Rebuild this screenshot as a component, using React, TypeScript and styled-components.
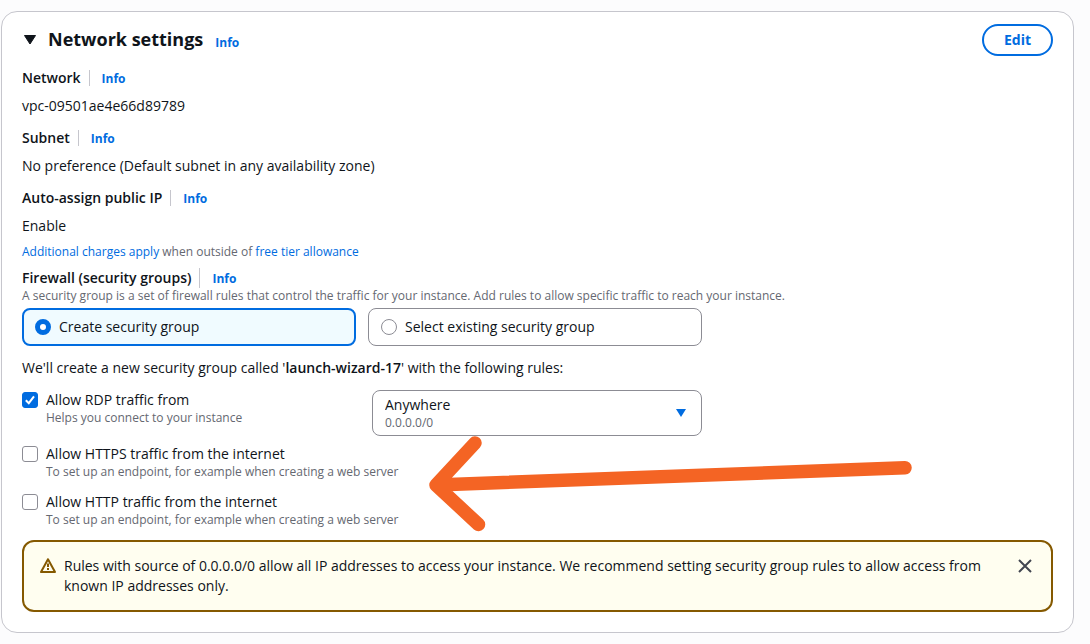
import React, { useId, useState } from "react";
import styled, { createGlobalStyle, css } from "styled-components";

const color = {
  text: "#0f141a",
  muted: "#656871",
  link: "#006ce0",
  border: "#8c8c94",
  divider: "#c6c6cd",
  warning: "#855900",
};

const GlobalStyle = createGlobalStyle`
  *, *::before, *::after { box-sizing: border-box; }
  body {
    margin: 0;
    background: #fcfcfd;
    color: ${color.text};
    font-family: "Open Sans", "Noto Sans", sans-serif;
    font-size: 14px;
    line-height: 20px;
  }
  p, h2, h3, fieldset { margin: 0; padding: 0; border: 0; min-width: 0; }
  button, select, input { font: inherit; color: inherit; margin: 0; }
  b { font-weight: 600; }
`;

const Page = styled.main`
  padding: 11px 16px 11px 1px;
`;

const Card = styled.section`
  display: flex;
  flex-direction: column;
  gap: 12px;
  padding: 12px 20px 20px;
  background: #fff;
  border: 1px solid ${color.divider};
  border-radius: 16px;
`;

const Header = styled.header`
  display: flex;
  align-items: center;
  justify-content: space-between;
`;

const HeadingGroup = styled.div`
  display: flex;
  align-items: baseline;
  gap: 12px;
`;

const ExpandButton = styled.button`
  display: flex;
  align-items: center;
  gap: 10px;
  padding: 0;
  border: 0;
  background: none;
  cursor: pointer;
`;

const Title = styled.h2`
  font-size: 18px;
  line-height: 24px;
  font-weight: 700;
`;

const InfoLink = styled.a`
  color: ${color.link};
  font-size: 12px;
  font-weight: 700;
  text-decoration: none;
`;

const EditButton = styled.button`
  height: 32px;
  padding: 0 20px;
  border: 2px solid ${color.link};
  border-radius: 20px;
  background: #fff;
  color: ${color.link};
  font-weight: 700;
  cursor: pointer;
`;

const Field = styled.div`
  display: flex;
  flex-direction: column;
  gap: 8px;
`;

const LabelRow = styled.div`
  display: flex;
  align-items: center;
`;

const Label = styled.h3`
  font-size: 14px;
  font-weight: 600;
  margin-right: 8px;
`;

const Divided = styled.span<{ $tall?: boolean }>`
  display: flex;
  align-items: center;
  height: ${(p) => (p.$tall ? 20 : 16)}px;
  padding: 2px 0 0 12px;
  border-left: 1px solid ${color.divider};
`;

const Small = styled.p`
  color: ${color.muted};
  font-size: 12px;
  line-height: 16px;
`;

const TextLink = styled.a`
  color: ${color.link};
  text-decoration: none;
`;

const Firewall = styled.div`
  margin-top: -4px;
`;

const Tiles = styled.fieldset`
  display: grid;
  grid-template-columns: 1fr 1fr;
  gap: 12px;
  max-width: 680px;
  margin-top: 4px;
`;

const Tile = styled.label<{ $selected: boolean }>`
  display: flex;
  align-items: center;
  gap: 8px;
  height: 38px;
  padding: 0 ${(p) => (p.$selected ? 11 : 12)}px;
  border: ${(p) => (p.$selected ? `2px solid ${color.link}` : `1px solid ${color.border}`)};
  border-radius: 8px;
  background: ${(p) => (p.$selected ? "#f0fbff" : "#fff")};
`;

const Radio = styled.input`
  appearance: none;
  flex: none;
  width: 16px;
  height: 16px;
  border: 1px solid ${color.border};
  border-radius: 50%;
  background: #fff;
  &:checked {
    border: 5px solid ${color.link};
  }
`;

const Rules = styled.div`
  position: relative;
  display: flex;
  flex-direction: column;
  gap: 12px;
`;

const RuleRow = styled.div`
  display: grid;
  grid-template-columns: 1fr 1fr;
  gap: 20px;
  max-width: 680px;
  margin-bottom: -4px;
`;

const Rule = styled.div`
  display: grid;
  grid-template-columns: 16px 1fr;
  column-gap: 8px;
  align-content: start;
`;

const checkedBox = css`
  background: ${color.link};
  border-color: ${color.link};
`;

const CheckHolder = styled.span`
  display: grid;
  align-items: center;
  justify-items: center;
  > * { grid-area: 1 / 1; }
`;

const CheckBox = styled.input`
  appearance: none;
  width: 16px;
  height: 16px;
  border: 1px solid ${color.border};
  border-radius: 3px;
  background: #fff;
  &:checked { ${checkedBox} }
`;

const Glyph = styled.svg`
  display: block;
  flex: none;
  pointer-events: none;
`;

const RuleHint = styled(Small)`
  grid-column: 2;
`;

const SelectHolder = styled.div`
  display: grid;
  > * { grid-area: 1 / 1; }
`;

const Select = styled.select`
  appearance: none;
  width: 100%;
  height: 46px;
  padding: 4px 32px 20px 12px;
  border: 1px solid ${color.border};
  border-radius: 8px;
  background: #fff;
  line-height: 20px;
`;

const SelectHint = styled(Small)`
  align-self: end;
  padding: 0 0 5px 13px;
  pointer-events: none;
`;

const SelectCaret = styled(Glyph)`
  align-self: center;
  justify-self: end;
  margin-right: 16px;
`;

const Arrow = styled.svg`
  position: absolute;
  left: 400px;
  top: 40px;
  pointer-events: none;
`;

const Alert = styled.div`
  display: flex;
  align-items: flex-start;
  gap: 8px;
  padding: 14px 19px 14px 16px;
  border: 2px solid ${color.warning};
  border-radius: 12px;
  background: #fffef0;
`;

const AlertIcon = styled.span`
  padding-top: 2px;
`;

const AlertText = styled.p`
  flex: 1;
  padding-right: 20px;
`;

const CloseButton = styled.button`
  display: flex;
  padding: 3px 0;
  border: 0;
  background: none;
  cursor: pointer;
`;

function Info() {
  return <InfoLink href="#info">Info</InfoLink>;
}

function FieldLabel({ children, tall }: { children: React.ReactNode; tall?: boolean }) {
  return (
    <LabelRow>
      <Label>{children}</Label>
      <Divided $tall={tall}>
        <Info />
      </Divided>
    </LabelRow>
  );
}

interface TrafficRuleProps {
  label: string;
  hint: string;
  initial?: boolean;
}

function TrafficRule({ label, hint, initial = false }: TrafficRuleProps) {
  const id = useId();
  const [checked, setChecked] = useState(initial);
  return (
    <Rule>
      <CheckHolder>
        <CheckBox
          id={id}
          type="checkbox"
          checked={checked}
          onChange={(e) => setChecked(e.target.checked)}
        />
        {checked && (
          <Glyph width="16" height="16" viewBox="0 0 16 16" fill="none" stroke="#fff" strokeWidth="2">
            <path d="M3.8 8.2 6.8 11.2 12 4.4" />
          </Glyph>
        )}
      </CheckHolder>
      <label htmlFor={id}>{label}</label>
      <RuleHint>{hint}</RuleHint>
    </Rule>
  );
}

const groupOptions = ["Create security group", "Select existing security group"];

export default function App() {
  const [group, setGroup] = useState(groupOptions[0]);
  return (
    <>
      <GlobalStyle />
      <Page>
        <Card>
          <Header>
            <HeadingGroup>
              <ExpandButton aria-expanded="true">
                <Glyph width="16" height="16" viewBox="0 0 16 16" fill={color.text}>
                  <path d="M2.5 4.5h11L8 13z" stroke={color.text} strokeWidth="1" strokeLinejoin="round" />
                </Glyph>
                <Title>Network settings</Title>
              </ExpandButton>
              <Info />
            </HeadingGroup>
            <EditButton>Edit</EditButton>
          </Header>

          <Field>
            <FieldLabel>Network</FieldLabel>
            <p>vpc-09501ae4e66d89789</p>
          </Field>
          <Field>
            <FieldLabel>Subnet</FieldLabel>
            <p>No preference (Default subnet in any availability zone)</p>
          </Field>
          <Field>
            <FieldLabel>Auto-assign public IP</FieldLabel>
            <p>Enable</p>
            <Small>
              <TextLink href="#charges">Additional charges apply</TextLink> when outside of{" "}
              <TextLink href="#free-tier">free tier allowance</TextLink>
            </Small>
          </Field>

          <Firewall>
            <FieldLabel tall>Firewall (security groups)</FieldLabel>
            <Small>
              A security group is a set of firewall rules that control the traffic for your instance. Add
              rules to allow specific traffic to reach your instance.
            </Small>
            <Tiles aria-label="Firewall (security groups)">
              {groupOptions.map((option) => (
                <Tile key={option} $selected={group === option}>
                  <Radio
                    type="radio"
                    name="security-group"
                    checked={group === option}
                    onChange={() => setGroup(option)}
                  />
                  {option}
                </Tile>
              ))}
            </Tiles>
          </Firewall>

          <p>
            We'll create a new security group called '<b>launch-wizard-17</b>' with the following rules:
          </p>

          <Rules>
            <RuleRow>
              <TrafficRule label="Allow RDP traffic from" hint="Helps you connect to your instance" initial />
              <SelectHolder>
                <Select aria-label="Source" defaultValue="anywhere">
                  <option value="anywhere">Anywhere</option>
                  <option value="custom">Custom</option>
                  <option value="my-ip">My IP</option>
                </Select>
                <SelectHint>0.0.0.0/0</SelectHint>
                <SelectCaret width="10" height="8" viewBox="0 0 10 8" fill={color.link}>
                  <path d="M0 0h10L5 8z" />
                </SelectCaret>
              </SelectHolder>
            </RuleRow>
            <TrafficRule
              label="Allow HTTPS traffic from the internet"
              hint="To set up an endpoint, for example when creating a web server"
            />
            <TrafficRule
              label="Allow HTTP traffic from the internet"
              hint="To set up an endpoint, for example when creating a web server"
            />
            <Arrow
              width="500"
              height="106"
              viewBox="422 430 500 106"
              fill="none"
              stroke="#f46424"
              strokeWidth="13.5"
              strokeLinecap="round"
              strokeLinejoin="round"
              aria-hidden="true"
            >
              <path d="M475 443 436 485 478.5 524.5M436 485 905 467.8" />
            </Arrow>
          </Rules>

          <Alert role="status">
            <AlertIcon>
              <Glyph width="16" height="16" viewBox="0 0 16 16" fill="none" stroke={color.warning} strokeWidth="2" strokeLinejoin="round">
                <path d="M8 1.2 1 14h14z" />
                <path d="M8 5.5v3.5M8 10v2" />
              </Glyph>
            </AlertIcon>
            <AlertText>
              Rules with source of 0.0.0.0/0 allow all IP addresses to access your instance. We recommend
              setting security group rules to allow access from known IP addresses only.
            </AlertText>
            <CloseButton aria-label="Close">
              <Glyph width="14" height="14" viewBox="0 0 14 14" fill="none" stroke="#424650" strokeWidth="2">
                <path d="M1 1 13 13M13 1 1 13" />
              </Glyph>
            </CloseButton>
          </Alert>
        </Card>
      </Page>
    </>
  );
}
